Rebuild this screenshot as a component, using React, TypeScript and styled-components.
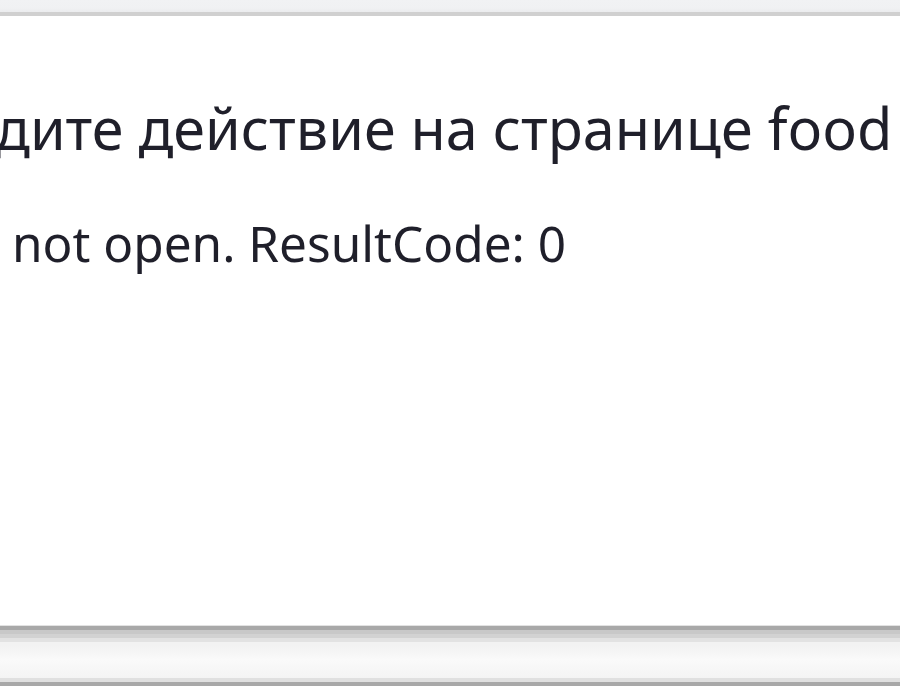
import React from 'react';
import styled, { createGlobalStyle } from 'styled-components';

const GlobalStyle = createGlobalStyle`
  html, body {
    margin: 0;
    padding: 0;
    background: #ffffff;
    overflow: hidden;
  }
`;

const Window = styled.div`
  display: flex;
  flex-direction: column;
  width: 900px;
  height: 700px;
  background: #ffffff;
  font-family: 'Noto Sans', 'Open Sans', sans-serif;
  color: #1f1f2a;
`;

const TopBar = styled.div`
  height: 12px;
  flex-shrink: 0;
  background: linear-gradient(to bottom, #f1f2f4 0, #f0f1f3 8px, #ebecee 12px);
  border-bottom: 4px solid #d0d0d0;
`;

const Body = styled.div`
  display: flex;
  flex-direction: column;
  height: 610px;
  flex-shrink: 0;
  padding-top: 83px;
  box-sizing: border-box;
  overflow: hidden;
  white-space: nowrap;
`;

const Title = styled.div`
  font-size: 57.5px;
  line-height: 58px;
  margin-left: -5px;
`;

const Message = styled.div`
  font-size: 49.5px;
  line-height: 49px;
  margin-top: 62px;
  padding-left: 12px;
`;

const Footer = styled.div`
  height: 52px;
  flex-shrink: 0;
  border-top: 4px solid #a8a8a8;
  border-bottom: 4px solid #a8a8a8;
  box-shadow: 0 -1px 0 #e2e2e2;
  background: linear-gradient(
    to bottom,
    #c8c8c8 0 4px,
    #d2d2d2 4px 8px,
    #e2e2e2 8px 12px,
    #f2f2f2 12px 16px,
    #fafafa 30px,
    #f4f4f4 48px,
    #e0e0e0 48px
  );
`;

export default function App() {
  return (
    <Window>
      <GlobalStyle />
      <TopBar />
      <Body>
        <Title>дите действие на странице food</Title>
        <Message>not open. ResultCode: 0</Message>
      </Body>
      <Footer />
    </Window>
  );
}
